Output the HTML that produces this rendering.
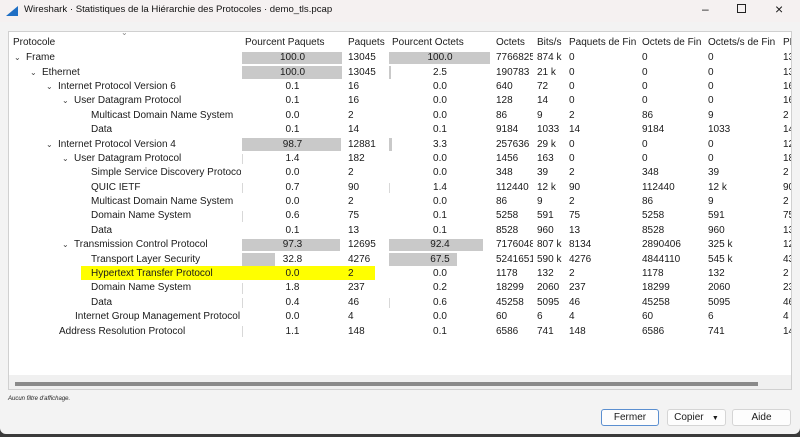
<!DOCTYPE html>
<html><head><meta charset="utf-8"><style>
*{margin:0;padding:0;box-sizing:border-box}
body{width:800px;height:437px;overflow:hidden;background:#3a3a3a;font-family:"Liberation Sans",sans-serif;font-size:10px;color:#1a1a1a;position:relative}
#win{position:absolute;left:0;top:0;width:800px;height:434px;background:#f3f3f3;border-radius:0 0 6px 6px}
#title{position:absolute;left:0;top:0;width:800px;height:22px;background:#f5f1f1}
#title .t{position:absolute;left:24px;top:4px;font-size:9.6px;color:#111}
#box{position:absolute;left:8px;top:31px;width:784px;height:359px;background:#fff;border:1px solid #d0d0d0;overflow:hidden}
table{border-collapse:collapse;table-layout:fixed;position:absolute;left:0;top:0;width:800px}
td{height:14.4px;padding:0 0 0 4px;white-space:nowrap;overflow:hidden;position:relative;line-height:14px}
tr.h td{height:19px;padding-top:2px}
td.p{text-align:center;padding:0}
.bar{position:absolute;left:1px;top:1px;bottom:1px;background:#c9c9c9}
.sep{position:absolute;left:1px;top:2px;bottom:2px;width:1px;background:#d8d8d8}
td.p span{position:relative}
.ch{display:inline-block;width:12px;font-size:8px;color:#444}
.hl{position:absolute;left:72px;top:234px;width:294px;height:14px;background:#ffff00}
#sb{position:absolute;left:6px;top:350px;width:743px;height:4px;background:#8a8a8a}
.btn{position:absolute;top:409px;height:17px;background:#fdfdfd;border:1px solid #d5d5d5;border-radius:3px;font-size:10px;text-align:center;line-height:15px}
</style></head><body>
<div id="win">
<div id="title">
<svg style="position:absolute;left:5px;top:5px" width="14" height="12"><path d="M1 11 L13 1 L13 11 Z" fill="#1f6fc4"/></svg>
<span class="t">Wireshark · Statistiques de la Hiérarchie des Protocoles · demo_tls.pcap</span>
<span style="position:absolute;left:702px;top:2px;font-size:12px">–</span>
<span style="position:absolute;left:737px;top:4px;width:9px;height:9px;border:1px solid #222"></span>
<span style="position:absolute;left:775px;top:1px;font-size:14px">×</span>
</div>
<div id="box">
<div class="hl"></div>
<span style="position:absolute;left:112px;top:-4px;font-size:8px;color:#888">⌄</span>
<table>
<colgroup><col style="width:232px"><col style="width:103px"><col style="width:44px"><col style="width:104px"><col style="width:41px"><col style="width:32px"><col style="width:73px"><col style="width:66px"><col style="width:75px"><col style="width:30px"></colgroup>
<tr class="h"><td>Protocole</td><td>Pourcent Paquets</td><td>Paquets</td><td>Pourcent Octets</td><td>Octets</td><td>Bits/s</td><td>Paquets de Fin</td><td>Octets de Fin</td><td>Octets/s de Fin</td><td>PD</td></tr>
<tr><td style="padding-left:5px"><span class="ch">⌄</span>Frame</td><td class="p"><div class="bar" style="width:100px"></div><span>100.0</span></td><td>13045</td><td class="p"><div class="bar" style="width:101px"></div><span>100.0</span></td><td>7766825</td><td>874 k</td><td>0</td><td>0</td><td>0</td><td>13</td></tr>
<tr><td style="padding-left:21px"><span class="ch">⌄</span>Ethernet</td><td class="p"><div class="bar" style="width:100px"></div><span>100.0</span></td><td>13045</td><td class="p"><div class="bar" style="width:2px"></div><span>2.5</span></td><td>190783</td><td>21 k</td><td>0</td><td>0</td><td>0</td><td>13</td></tr>
<tr><td style="padding-left:37px"><span class="ch">⌄</span>Internet Protocol Version 6</td><td class="p"><span>0.1</span></td><td>16</td><td class="p"><span>0.0</span></td><td>640</td><td>72</td><td>0</td><td>0</td><td>0</td><td>16</td></tr>
<tr><td style="padding-left:53px"><span class="ch">⌄</span>User Datagram Protocol</td><td class="p"><span>0.1</span></td><td>16</td><td class="p"><span>0.0</span></td><td>128</td><td>14</td><td>0</td><td>0</td><td>0</td><td>16</td></tr>
<tr><td style="padding-left:82px">Multicast Domain Name System</td><td class="p"><span>0.0</span></td><td>2</td><td class="p"><span>0.0</span></td><td>86</td><td>9</td><td>2</td><td>86</td><td>9</td><td>2</td></tr>
<tr><td style="padding-left:82px">Data</td><td class="p"><span>0.1</span></td><td>14</td><td class="p"><span>0.1</span></td><td>9184</td><td>1033</td><td>14</td><td>9184</td><td>1033</td><td>14</td></tr>
<tr><td style="padding-left:37px"><span class="ch">⌄</span>Internet Protocol Version 4</td><td class="p"><div class="bar" style="width:99px"></div><span>98.7</span></td><td>12881</td><td class="p"><div class="bar" style="width:3px"></div><span>3.3</span></td><td>257636</td><td>29 k</td><td>0</td><td>0</td><td>0</td><td>12</td></tr>
<tr><td style="padding-left:53px"><span class="ch">⌄</span>User Datagram Protocol</td><td class="p"><div class="sep"></div><span>1.4</span></td><td>182</td><td class="p"><span>0.0</span></td><td>1456</td><td>163</td><td>0</td><td>0</td><td>0</td><td>18</td></tr>
<tr><td style="padding-left:82px">Simple Service Discovery Protocol</td><td class="p"><span>0.0</span></td><td>2</td><td class="p"><span>0.0</span></td><td>348</td><td>39</td><td>2</td><td>348</td><td>39</td><td>2</td></tr>
<tr><td style="padding-left:82px">QUIC IETF</td><td class="p"><div class="sep"></div><span>0.7</span></td><td>90</td><td class="p"><div class="sep"></div><span>1.4</span></td><td>112440</td><td>12 k</td><td>90</td><td>112440</td><td>12 k</td><td>90</td></tr>
<tr><td style="padding-left:82px">Multicast Domain Name System</td><td class="p"><span>0.0</span></td><td>2</td><td class="p"><span>0.0</span></td><td>86</td><td>9</td><td>2</td><td>86</td><td>9</td><td>2</td></tr>
<tr><td style="padding-left:82px">Domain Name System</td><td class="p"><div class="sep"></div><span>0.6</span></td><td>75</td><td class="p"><span>0.1</span></td><td>5258</td><td>591</td><td>75</td><td>5258</td><td>591</td><td>75</td></tr>
<tr><td style="padding-left:82px">Data</td><td class="p"><span>0.1</span></td><td>13</td><td class="p"><span>0.1</span></td><td>8528</td><td>960</td><td>13</td><td>8528</td><td>960</td><td>13</td></tr>
<tr><td style="padding-left:53px"><span class="ch">⌄</span>Transmission Control Protocol</td><td class="p"><div class="bar" style="width:98px"></div><span>97.3</span></td><td>12695</td><td class="p"><div class="bar" style="width:94px"></div><span>92.4</span></td><td>7176048</td><td>807 k</td><td>8134</td><td>2890406</td><td>325 k</td><td>12</td></tr>
<tr><td style="padding-left:82px">Transport Layer Security</td><td class="p"><div class="bar" style="width:33px"></div><span>32.8</span></td><td>4276</td><td class="p"><div class="bar" style="width:68px"></div><span>67.5</span></td><td>5241651</td><td>590 k</td><td>4276</td><td>4844110</td><td>545 k</td><td>43</td></tr>
<tr><td style="padding-left:82px">Hypertext Transfer Protocol</td><td class="p"><span>0.0</span></td><td>2</td><td class="p"><span>0.0</span></td><td>1178</td><td>132</td><td>2</td><td>1178</td><td>132</td><td>2</td></tr>
<tr><td style="padding-left:82px">Domain Name System</td><td class="p"><div class="sep"></div><span>1.8</span></td><td>237</td><td class="p"><span>0.2</span></td><td>18299</td><td>2060</td><td>237</td><td>18299</td><td>2060</td><td>23</td></tr>
<tr><td style="padding-left:82px">Data</td><td class="p"><div class="sep"></div><span>0.4</span></td><td>46</td><td class="p"><div class="sep"></div><span>0.6</span></td><td>45258</td><td>5095</td><td>46</td><td>45258</td><td>5095</td><td>46</td></tr>
<tr><td style="padding-left:66px">Internet Group Management Protocol</td><td class="p"><span>0.0</span></td><td>4</td><td class="p"><span>0.0</span></td><td>60</td><td>6</td><td>4</td><td>60</td><td>6</td><td>4</td></tr>
<tr><td style="padding-left:50px">Address Resolution Protocol</td><td class="p"><div class="sep"></div><span>1.1</span></td><td>148</td><td class="p"><span>0.1</span></td><td>6586</td><td>741</td><td>148</td><td>6586</td><td>741</td><td>14</td></tr>
</table>
<div style="position:absolute;left:0;top:343px;width:784px;height:16px;background:#f0f0f0"></div>
<div id="sb"></div>
</div>
<div style="position:absolute;left:8px;top:396px;font-size:6px;font-style:italic;color:#222">Aucun filtre d'affichage.</div>
<div class="btn" style="left:601px;width:58px;border-color:#5b8fd0">Fermer</div>
<div class="btn" style="left:667px;width:59px">Copier &nbsp;&nbsp;<span style="font-size:7px">▼</span></div>
<div class="btn" style="left:732px;width:59px">Aide</div>
</div>
</body></html>
